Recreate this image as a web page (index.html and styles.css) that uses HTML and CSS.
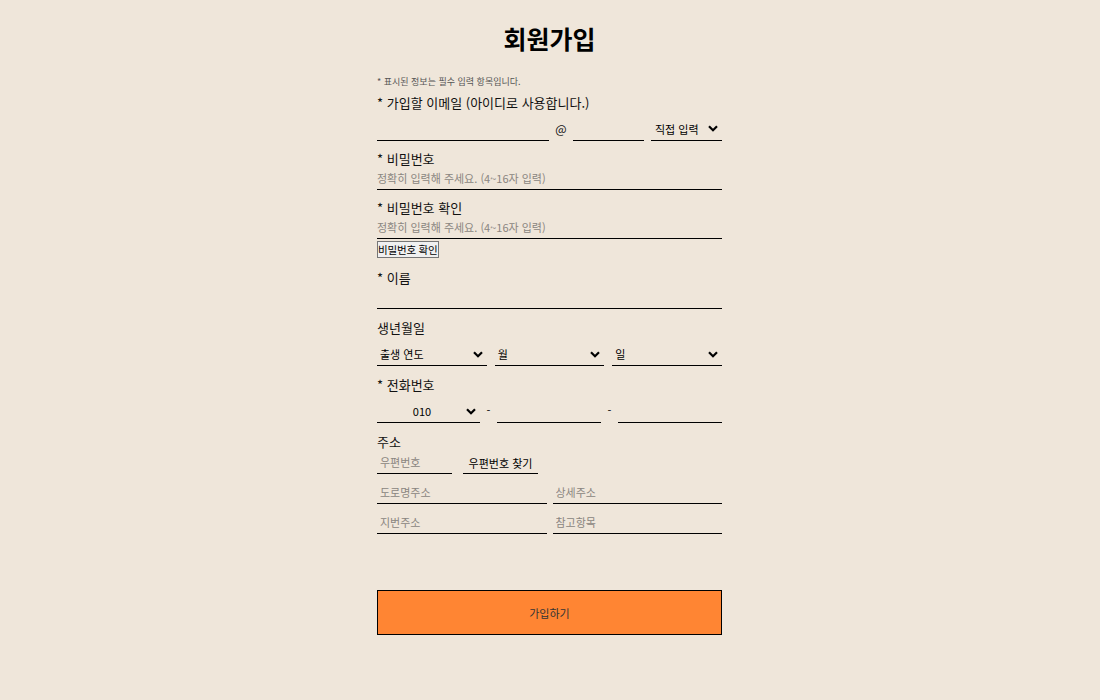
FILE: index.html
```html
<!DOCTYPE html>
<html lang="ko">
<head>
<meta charset="utf-8">
<title>회원가입</title>
<link rel="stylesheet" href="styles.css">
</head>
<body>
<main class="page">
  <h1 class="title">회원가입</h1>
  <form class="form">
    <p class="note">* 표시된 정보는 필수 입력 항목입니다.</p>

    <div class="group g-email">
      <label class="label">* 가입할 이메일 (아이디로 사용합니다.)</label>
      <div class="row email-row">
        <input class="field w-email" type="text">
        <span class="at">@</span>
        <input class="field w-domain" type="text">
        <div class="select w-domain sel-email">
          <span class="sel-text">직접 입력</span>
          <svg class="chev" width="10" height="7" viewBox="0 0 10 7"><path d="M1 1.2 L5 5.2 L9 1.2" fill="none" stroke="#000" stroke-width="2.2"/></svg>
        </div>
      </div>
    </div>

    <div class="group">
      <label class="label">* 비밀번호</label>
      <input class="field full pw" type="password" placeholder="정확히 입력해 주세요. (4~16자 입력)">
    </div>

    <div class="group">
      <label class="label">* 비밀번호 확인</label>
      <input class="field full pw" type="password" placeholder="정확히 입력해 주세요. (4~16자 입력)">
      <button type="button" class="check-btn">비밀번호 확인</button>
    </div>

    <div class="group g-name">
      <label class="label">* 이름</label>
      <input class="field full" type="text">
    </div>

    <div class="group g-birth">
      <label class="label">생년월일</label>
      <div class="row birth-row">
        <div class="select flex1"><span class="sel-text">출생 연도</span>
          <svg class="chev" width="10" height="7" viewBox="0 0 10 7"><path d="M1 1.2 L5 5.2 L9 1.2" fill="none" stroke="#000" stroke-width="2.2"/></svg></div>
        <div class="select flex1"><span class="sel-text">월</span>
          <svg class="chev" width="10" height="7" viewBox="0 0 10 7"><path d="M1 1.2 L5 5.2 L9 1.2" fill="none" stroke="#000" stroke-width="2.2"/></svg></div>
        <div class="select flex1"><span class="sel-text">일</span>
          <svg class="chev" width="10" height="7" viewBox="0 0 10 7"><path d="M1 1.2 L5 5.2 L9 1.2" fill="none" stroke="#000" stroke-width="2.2"/></svg></div>
      </div>
    </div>

    <div class="group g-phone">
      <label class="label">* 전화번호</label>
      <div class="row phone-row">
        <div class="select flex1 sel-phone"><span class="sel-text center">010</span>
          <svg class="chev" width="10" height="7" viewBox="0 0 10 7"><path d="M1 1.2 L5 5.2 L9 1.2" fill="none" stroke="#000" stroke-width="2.2"/></svg></div>
        <span class="dash">-</span>
        <input class="field flex1" type="text">
        <span class="dash">-</span>
        <input class="field flex1" type="text">
      </div>
    </div>

    <div class="group g-addr">
      <label class="label">주소</label>
      <div class="row post-row">
        <input class="field pad w-post" type="text" placeholder="우편번호">
        <button type="button" class="post-btn">우편번호 찾기</button>
      </div>
      <div class="row addr-row">
        <input class="field pad flex1" type="text" placeholder="도로명주소">
        <input class="field pad flex1" type="text" placeholder="상세주소">
      </div>
      <div class="row addr-row">
        <input class="field pad flex1" type="text" placeholder="지번주소">
        <input class="field pad flex1" type="text" placeholder="참고항목">
      </div>
    </div>

    <button type="submit" class="submit">가입하기</button>
  </form>
</main>
</body>
</html>
```

FILE: styles.css
```css
* { box-sizing: border-box; }

html, body {
  margin: 0;
  padding: 0;
  background: #efe6da;
}

body {
  font-family: "Noto Sans CJK KR", "Noto Sans", "Liberation Sans", sans-serif;
  color: #000;
}

.page {
  width: 346px;
  padding-right: 1px;
  margin: 0 auto;
  padding-top: 21px;
}

.title {
  margin: 0;
  font-size: 25px;
  line-height: 34px;
  font-weight: 700;
  text-align: center;
}

.form {
  display: flex;
  flex-direction: column;
}

.note {
  margin: 22px 0 0;
  font-size: 9px;
  line-height: 10px;
  color: #555;
}

.group {
  display: flex;
  flex-direction: column;
  margin-top: 10px;
}

.g-email { margin-top: 8px; }
.g-name { margin-top: 12px; }
.g-birth { margin-top: 11px; }
.g-phone { margin-top: 11px; }

.label {
  font-size: 13px;
  line-height: 16px;
  color: #111;
}

.row {
  display: flex;
  align-items: flex-end;
}

.field {
  height: 23px;
  border: 0;
  border-bottom: 1px solid #000;
  background: transparent;
  padding: 0;
  font-family: inherit;
  font-size: 11px;
  outline: none;
  min-width: 0;
}

.field::placeholder { color: #8a8580; }

.field.pad { padding-left: 3px; }

.full { width: 100%; }

.email-row { margin-top: 5px; }
.email-row .field { height: 25px; }
.w-email { width: 172px; }
.w-domain { width: 71px; }
.at {
  width: 24px;
  text-align: center;
  font-size: 12px;
  line-height: 16px;
  align-self: center;
  color: #111;
}
.sel-email { margin-left: 7px; }

.select {
  position: relative;
  height: 23px;
  border-bottom: 1px solid #000;
  display: flex;
  align-items: center;
  padding-left: 3px;
  font-size: 11px;
}
.sel-email { height: 25px; padding-left: 4px; padding-top: 2px; }

.sel-text { flex: 1; }
.sel-text.center { text-align: center; padding-right: 16px; }

.chev {
  position: absolute;
  right: 4px;
  top: 50%;
  margin-top: -3px;
}

.flex1 { flex: 1; }

.check-btn {
  align-self: flex-start;
  margin-top: 2px;
  height: 17px;
  padding: 0;
  font-family: inherit;
  font-size: 10.5px;
  line-height: 14px;
  letter-spacing: -0.2px;
  color: #000;
  background: #f0f0f0;
  border: 1px solid #767676;
  border-radius: 0;
}

.birth-row { gap: 8px; margin-top: 7px; }

.phone-row { margin-top: 7px; }
.phone-row .sel-phone { flex: 0 0 103px; }
.dash {
  width: 17px;
  text-align: center;
  font-size: 11px;
  align-self: center;
  padding-bottom: 4px;
}

.g-addr { margin-top: 11px; }
.post-row { margin-top: 1px; gap: 11px; }
.w-post { width: 75px; }
.post-btn {
  width: 75px;
  height: 22px;
  padding: 0;
  border: 0;
  border-bottom: 1px solid #000;
  background: transparent;
  font-family: inherit;
  font-size: 11px;
  color: #000;
}

.addr-row { gap: 6px; margin-top: 7px; }
.addr-row + .addr-row { margin-top: 7px; }

.submit {
  margin-top: 56px;
  width: 100%;
  height: 45px;
  background: #ff8533;
  border: 1px solid #000;
  font-family: inherit;
  font-size: 11px;
  color: #333;
  padding: 0;
}
```
